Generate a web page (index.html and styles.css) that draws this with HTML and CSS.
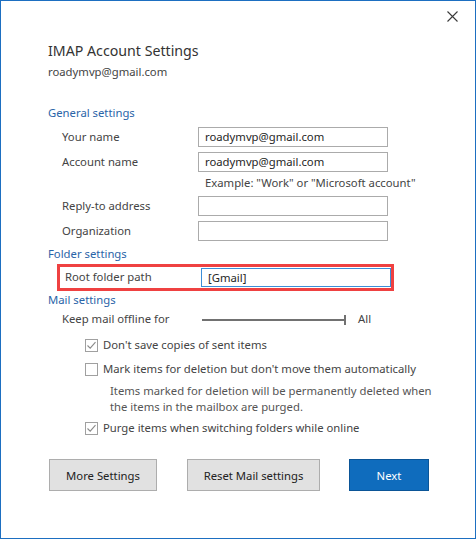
FILE: index.html
```html
<!DOCTYPE html>
<html>
<head>
<meta charset="utf-8">
<link rel="stylesheet" href="styles.css">
</head>
<body>
<div class="dialog">
  <div class="titlebar">
    <button class="close" aria-label="Close">
      <svg width="11" height="11" viewBox="0 0 11 11"><path d="M0.5 0.5 L10.5 10.5 M10.5 0.5 L0.5 10.5" stroke="#3a3a3a" stroke-width="1.1" fill="none"/></svg>
    </button>
  </div>
  <div class="content">
    <h1 class="title">IMAP Account Settings</h1>
    <div class="subtitle">roadymvp@gmail.com</div>

    <h2 class="section first">General settings</h2>
    <div class="form">
      <div class="row"><span class="label">Your name</span><div class="input">roadymvp@gmail.com</div></div>
      <div class="row"><span class="label">Account name</span><div class="input">roadymvp@gmail.com</div></div>
    </div>
    <div class="hint">Example: "Work" or "Microsoft account"</div>
    <div class="form">
      <div class="row"><span class="label">Reply-to address</span><div class="input"></div></div>
      <div class="row"><span class="label">Organization</span><div class="input"></div></div>
    </div>

    <h2 class="section folder">Folder settings</h2>
    <div class="highlight">
      <div class="row"><span class="label">Root folder path</span><div class="input focus">[Gmail]</div></div>
    </div>

    <h2 class="section mail">Mail settings</h2>
    <div class="offline">
      <span class="label">Keep mail offline for</span>
      <div class="slider"><span class="track"></span><span class="tick"></span></div>
      <span class="all">All</span>
    </div>

    <div class="check cb1">
      <span class="box"><svg width="11" height="11" viewBox="0 0 11 11"><path d="M1.5 5.5 L4.2 8.2 L9.5 2.2" stroke="#8a8a8a" stroke-width="1.1" fill="none"/></svg></span>
      <span>Don't save copies of sent items</span>
    </div>
    <div class="check cb2">
      <span class="box"></span>
      <span>Mark items for deletion but don't move them automatically</span>
    </div>
    <p class="info">Items marked for deletion will be permanently deleted when the items in the mailbox are purged.</p>
    <div class="check cb3">
      <span class="box"><svg width="11" height="11" viewBox="0 0 11 11"><path d="M1.5 5.5 L4.2 8.2 L9.5 2.2" stroke="#8a8a8a" stroke-width="1.1" fill="none"/></svg></span>
      <span>Purge items when switching folders while online</span>
    </div>

    <div class="buttons">
      <button class="btn more">More Settings</button>
      <button class="btn reset">Reset Mail settings</button>
      <button class="btn primary">Next</button>
    </div>
  </div>
</div>
</body>
</html>
```

FILE: styles.css
```css
* { box-sizing: border-box; }
html, body { margin: 0; padding: 0; background: #fff; }
body {
  font-family: "Noto Sans", "Open Sans", sans-serif;
  font-size: 11.3px;
  line-height: 16px;
  color: #444;
}
.dialog {
  width: 476px;
  height: 539px;
  border: 1px solid #1d6fc1;
  background: #fff;
}
.titlebar {
  height: 40px;
  display: flex;
  justify-content: flex-end;
  align-items: flex-start;
  padding: 10px 17px 0 0;
}
.close {
  border: 0;
  background: none;
  padding: 0;
  width: 11px;
  height: 11px;
  display: block;
}
.close svg { display: block; }
.content { padding-left: 47px; }
.title {
  margin: 0;
  font-weight: normal;
  font-size: 14.2px;
  line-height: 20px;
  color: #333;
}
.subtitle { margin-top: 3px; color: #444; }
.section {
  margin: 0;
  font-weight: normal;
  font-size: 11.3px;
  line-height: 16px;
  color: #2a64a8;
}
.section.first { margin-top: 25px; }
.form {
  display: flex;
  flex-direction: column;
  gap: 5px;
  margin-top: 6px;
  padding-left: 14px;
}
.row {
  display: flex;
  align-items: center;
  height: 20px;
}
.label { width: 136px; flex: none; color: #444; }
.input {
  width: 190px;
  height: 20px;
  border: 1px solid #ababab;
  padding: 0 6px;
  font-size: 11.3px;
  line-height: 18px;
  color: #262626;
}
.input.focus { border-color: #3c8ed8; height: 19px; line-height: 17px; }
.hint {
  margin-top: 3px;
  padding-left: 157px;
  color: #444;
}
.hint + .form { margin-top: 5px; }
.section.folder { margin-top: 5px; }
.highlight {
  margin-top: 2px;
  margin-left: 9px;
  width: 337px;
  height: 27px;
  border: 3px solid #ef4141;
  padding: 0 0 0 5px;
}
.highlight .row { height: 20px; }
.section.mail { margin-top: 1px; }
.offline {
  display: flex;
  align-items: center;
  margin-top: 3px;
  padding-left: 14px;
  height: 16px;
}
.slider {
  width: 144px;
  height: 10px;
  margin-left: 4px;
  margin-top: 2px;
  display: flex;
  align-items: center;
}
.track { display: block; width: 142px; height: 2px; background: #717171; }
.tick { display: block; width: 2px; height: 10px; background: #717171; }
.all { margin-left: 12px; }
.check {
  display: flex;
  align-items: center;
  padding-left: 37px;
  height: 16px;
  color: #444;
}
.box {
  width: 13px;
  height: 13px;
  border: 1px solid #a0a0a0;
  margin-right: 5px;
  display: flex;
  align-items: center;
  justify-content: center;
  flex: none;
}
.box svg { display: block; }
.cb1 { margin-top: 10px; }
.cb2 { margin-top: 8px; }
.info {
  margin: 6px 0 0 62px;
  width: 330px;
  color: #555;
}
.cb3 { margin-top: 5px; }
.buttons {
  display: flex;
  margin-top: 23px;
  padding-left: 1px;
}
.btn {
  height: 32px;
  font-family: inherit;
  font-size: 11.3px;
  color: #222;
  background: #e1e1e1;
  border: 1px solid #adadad;
  padding: 0;
}
.more { width: 108px; }
.reset { width: 133px; margin-left: 30px; }
.primary {
  width: 80px;
  margin-left: 29px;
  background: #0f6cbd;
  border-color: #0b5597;
  color: #fff;
}
```
